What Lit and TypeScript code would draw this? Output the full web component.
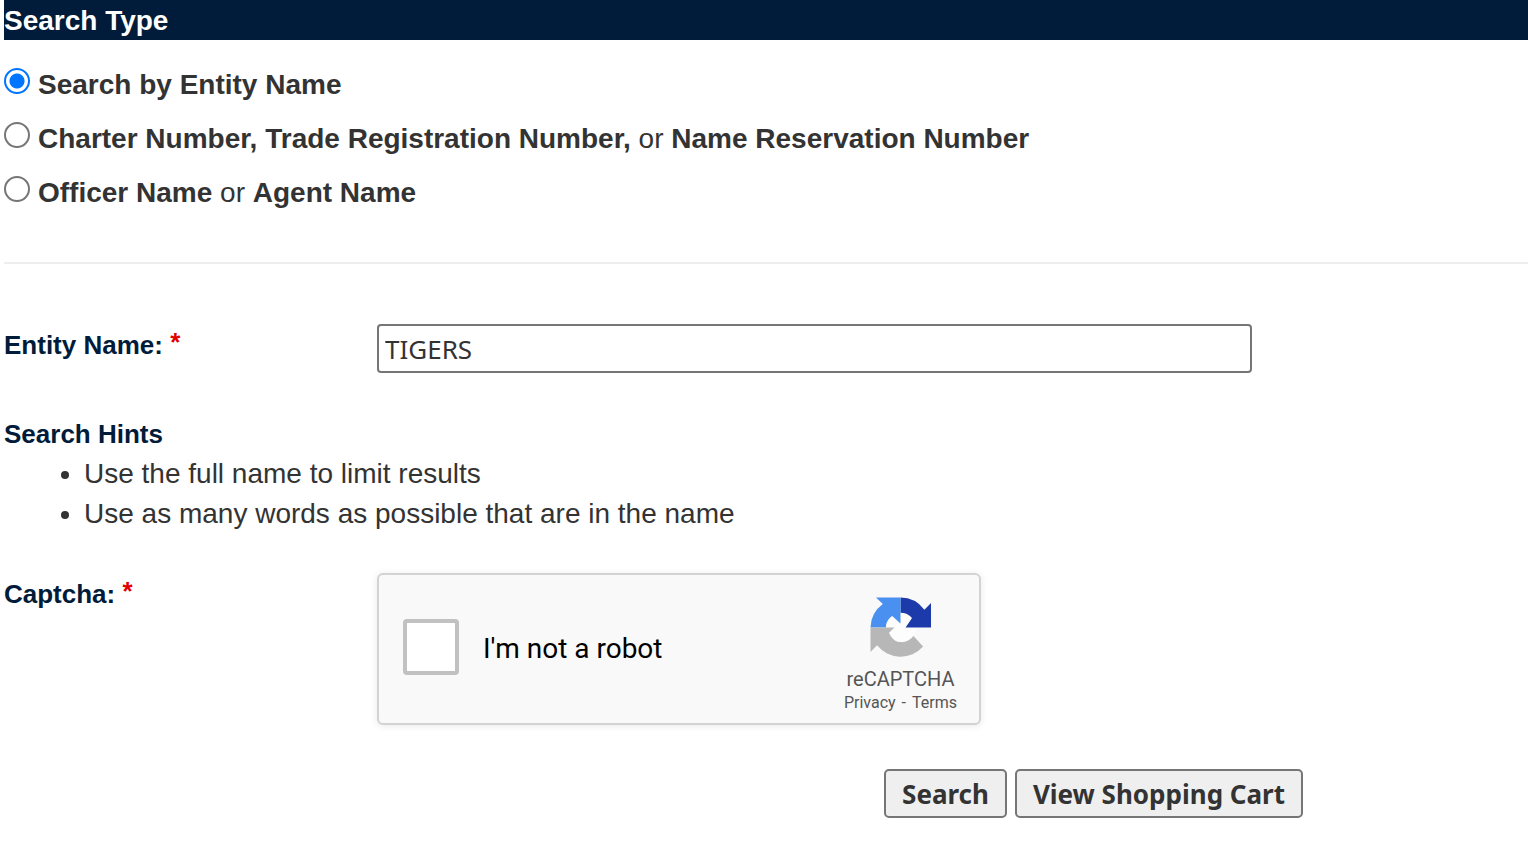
import { LitElement, html, css } from "lit";
import { customElement, state } from "lit/decorators.js";

@customElement("captcha-box")
export class CaptchaBox extends LitElement {
  static styles = css`
    :host { display: block; }
    .box {
      box-sizing: border-box;
      display: flex;
      align-items: center;
      justify-content: space-between;
      max-width: 604px;
      height: 152px;
      padding: 0 22px 0 24px;
      border: 2px solid #d3d3d3;
      border-radius: 6px;
      background: #f9f9f9;
      box-shadow: 0 1px 6px 1px rgba(0, 0, 0, 0.07);
      font-family: Roboto, sans-serif;
    }
    .check {
      display: flex;
      align-items: center;
      gap: 24px;
      padding-bottom: 4px;
      font-size: 28px;
      line-height: 34px;
      color: #000;
    }
    .check span { padding-top: 4px; }
    .check input {
      appearance: none;
      box-sizing: border-box;
      width: 56px;
      height: 56px;
      margin: 0;
      border: 4px solid #c1c1c1;
      border-radius: 4px;
      background: #fff;
    }
    .check input:checked { background: #4a90e2; }
    .brand {
      display: flex;
      flex-direction: column;
      align-items: center;
      padding-top: 12px;
      color: #555;
    }
    .logo { width: 64px; height: 64px; margin-bottom: 8px; }
    .name { font-size: 20px; line-height: 24px; }
    .links { display: flex; gap: 6px; font-size: 16px; line-height: 24px; }
    .links a { color: inherit; text-decoration: none; }
  `;

  render() {
    return html`
      <div class="box">
        <label class="check"><input type="checkbox" /><span>I'm not a robot</span></label>
        <div class="brand">
          <svg class="logo" viewBox="0 0 64 64" aria-hidden="true">
            <circle cx="33" cy="32" r="15" fill="#fdfdfd" />
            <path fill="#1c3aa9" d="M63 32.500V7.900l-6.600 6.800A30 30 0 0 0 32.500 2.500v15.200c4.600 0 8.600 1.600 11.500 5.300L37.600 32.500z" />
            <path fill="#4a90f0" d="M32.500 2.500H8l6.800 6.600A30 30 0 0 0 2.500 32.500h15.400c0-4.800 2.400-9 6.300-11.500L32.500 28.500z" />
            <path fill="#b7b7b7" d="M2.500 32.500v24.600l6.600-6.800A30 30 0 0 0 55.100 51.600L45.500 41.100c-3.200 4.200-7.800 6.400-13 6-5-.2-9-3.400-11.500-9.400L26.500 32.500z" />
          </svg>
          <div class="name">reCAPTCHA</div>
          <div class="links"><a href="#privacy">Privacy</a><span>-</span><a href="#terms">Terms</a></div>
        </div>
      </div>
    `;
  }
}

@customElement("app-root")
export class AppRoot extends LitElement {
  static styles = css`
    :host {
      display: block;
      padding-left: 4px;
      background: #fff;
      color: #333;
      font: 28px/40px "Liberation Sans", Arial, sans-serif;
    }
    h1, h2, ul, form, fieldset { margin: 0; padding: 0; }
    fieldset { border: 0; min-width: 0; }
    h1 {
      padding-top: 2px;
      background: #001c3a;
      color: #fff;
      font-size: 28px;
      line-height: 38px;
    }
    .types {
      display: flex;
      flex-direction: column;
      gap: 14px;
      padding: 25px 0 49px;
      border-bottom: 2px solid #eee;
    }
    .type { display: flex; align-items: flex-start; gap: 8px; }
    .type input {
      appearance: none;
      box-sizing: border-box;
      flex: none;
      width: 26px;
      height: 26px;
      margin: 3px 0 0;
      border: 2px solid #767676;
      border-radius: 50%;
      background: #fff;
    }
    .type input:checked {
      border-color: #0075ff;
      background: radial-gradient(circle, #0075ff 7px, #fff 8px);
    }
    .row {
      display: grid;
      grid-template-columns: 373px minmax(0, 1fr);
      align-items: start;
    }
    .entity { padding-top: 60px; }
    .label, h2 {
      color: #001c3a;
      font-size: 26px;
      line-height: 40px;
      font-weight: 700;
    }
    .label { line-height: 42px; }
    .star { color: #e00000; line-height: 20px; vertical-align: 3px; }
    .text {
      box-sizing: border-box;
      width: 76%;
      height: 49px;
      padding: 0 6px;
      border: 2px solid #767676;
      border-radius: 4px;
      background: #fff;
      color: #333;
      font: 26px/40px "Noto Sans", sans-serif;
    }
    h2 { padding-top: 41px; }
    ul { padding-left: 80px; }
    .captcha { padding-top: 39px; }
    .actions {
      display: flex;
      justify-content: flex-end;
      gap: 8px;
      padding: 44px 225px 40px 0;
    }
    button {
      height: 49px;
      padding: 0 16px;
      border: 2px solid #767676;
      border-radius: 5px;
      background: #efefef;
      color: #333;
      font: 700 26px/40px "Noto Sans", sans-serif;
    }
  `;

  @state() private selected = "entity";

  private types = [
    { id: "entity", label: html`<b>Search by Entity Name</b>` },
    {
      id: "number",
      label: html`<b>Charter Number, Trade Registration Number,</b> or <b>Name Reservation Number</b>`,
    },
    { id: "person", label: html`<b>Officer Name</b> or <b>Agent Name</b>` },
  ];

  render() {
    return html`
      <h1>Search Type</h1>
      <form @submit=${(e: Event) => e.preventDefault()}>
        <fieldset class="types" aria-label="Search Type">
          ${this.types.map(
            (t) => html`
              <label class="type">
                <input
                  type="radio"
                  name="type"
                  .checked=${this.selected === t.id}
                  @change=${() => (this.selected = t.id)}
                />
                <span>${t.label}</span>
              </label>
            `
          )}
        </fieldset>
        <div class="row entity">
          <label class="label" for="name">Entity Name: <span class="star">*</span></label>
          <input class="text" id="name" type="text" value="TIGERS" required />
        </div>
        <h2>Search Hints</h2>
        <ul>
          <li>Use the full name to limit results</li>
          <li>Use as many words as possible that are in the name</li>
        </ul>
        <div class="row captcha">
          <div class="label">Captcha: <span class="star">*</span></div>
          <captcha-box></captcha-box>
        </div>
        <div class="actions">
          <button type="submit">Search</button>
          <button type="button">View Shopping Cart</button>
        </div>
      </form>
    `;
  }
}
